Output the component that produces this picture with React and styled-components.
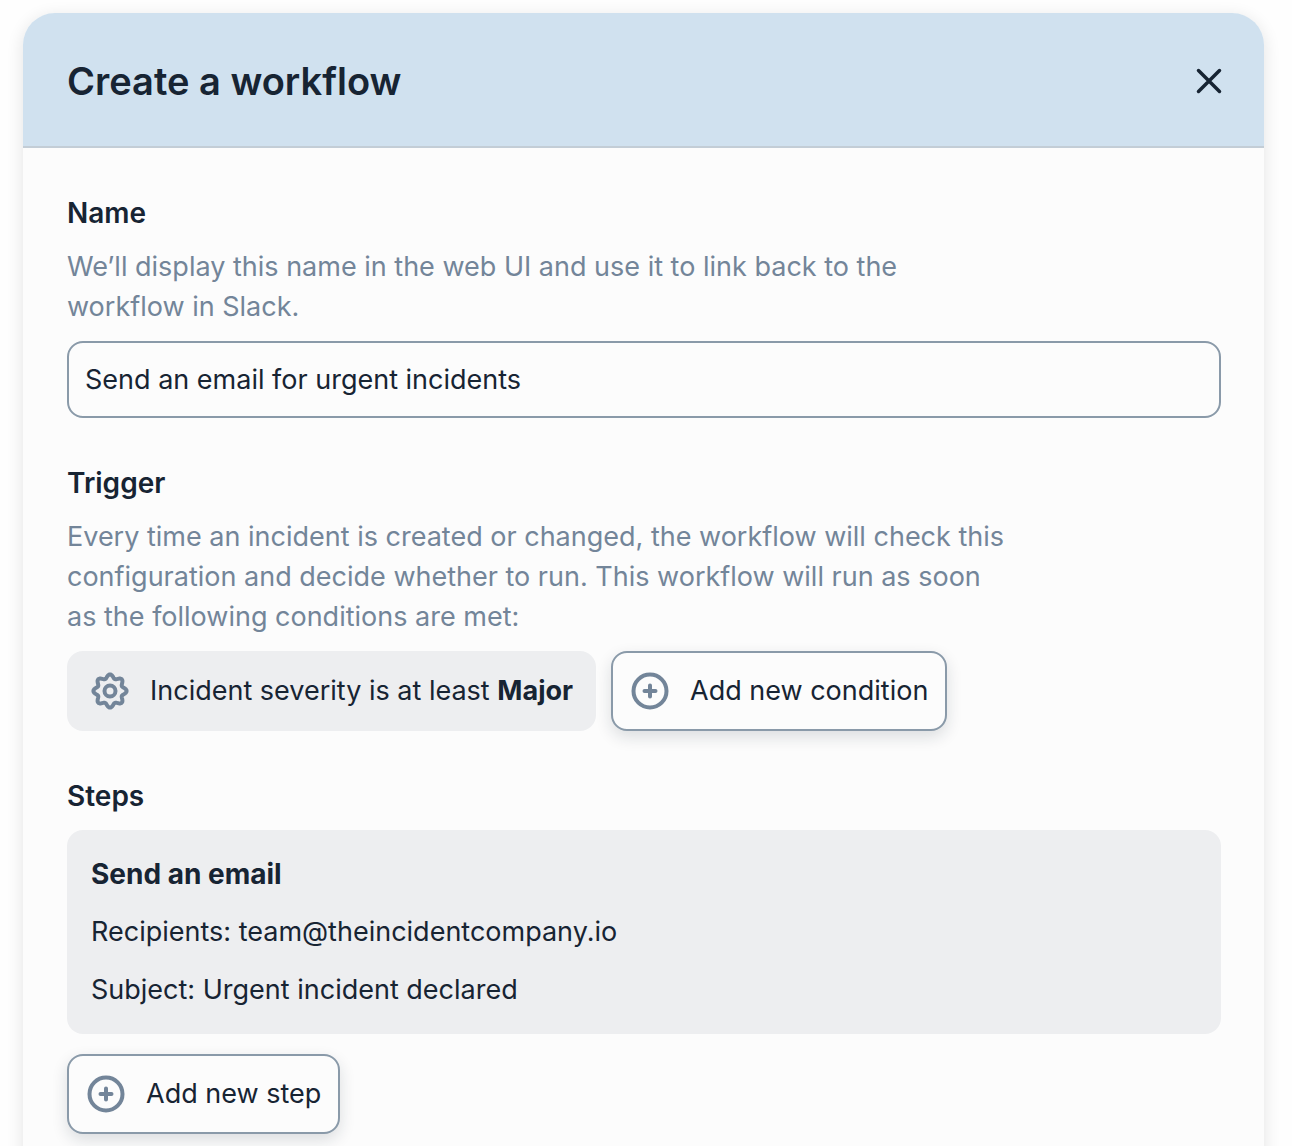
import React from 'react';
import styled, { createGlobalStyle } from 'styled-components';

const GlobalStyle = createGlobalStyle`
    * {
        box-sizing: border-box;
    }
    body {
        margin: 0;
        background: #fefefe;
        color: #172433;
        font-family: Inter, 'Liberation Sans', sans-serif;
        font-size: 27px;
        line-height: 40px;
    }
`;

const Panel = styled.main`
    margin: 13px 28px 0 23px;
    border-radius: 32px 32px 0 0;
    background: #fcfcfc;
    box-shadow: 0 4px 16px 2px rgba(0, 0, 0, 0.09);
`;

const Header = styled.header`
    display: flex;
    align-items: center;
    justify-content: space-between;
    padding: 44px 42px 41px 44px;
    border-bottom: 2px solid #c3cdd6;
    border-radius: 32px 32px 0 0;
    background: #d0e1ef;
`;

const Title = styled.h1`
    margin: 0;
    font-size: 38px;
    line-height: 48px;
    font-weight: 600;
`;

const CloseButton = styled.button`
    display: flex;
    padding: 0;
    border: 0;
    background: none;
    color: inherit;
    cursor: pointer;
`;

const Form = styled.form`
    display: flex;
    flex-direction: column;
    gap: 45px;
    padding: 45px 43px 60px 44px;
`;

const Section = styled.section`
    display: flex;
    flex-direction: column;
    gap: 14px;
`;

const Label = styled.label`
    font-size: 28px;
    font-weight: 600;
`;

const Heading = styled.h2`
    margin: 0;
    font-size: 28px;
    line-height: 40px;
    font-weight: 600;
`;

const Description = styled.p`
    max-width: 944px;
    margin: 0;
    color: #738599;
`;

const TextInput = styled.input`
    width: 100%;
    height: 77px;
    padding: 0 16px;
    border: 2px solid #8a9aa9;
    border-radius: 16px;
    background: #fcfcfc;
    color: inherit;
    font: inherit;
`;

const Row = styled.div`
    display: flex;
    flex-wrap: wrap;
    gap: 15px;
`;

const Condition = styled.div`
    display: flex;
    align-items: center;
    gap: 20px;
    height: 80px;
    padding: 0 23px;
    border-radius: 16px;
    background: #edeef0;

    strong {
        font-weight: 700;
    }
`;

const AddButton = styled.button`
    display: flex;
    align-items: center;
    align-self: flex-start;
    gap: 20px;
    height: 80px;
    padding: 0 17px;
    border: 2px solid #8a9aa9;
    border-radius: 16px;
    background: #fcfcfc;
    box-shadow: 0 6px 16px rgba(23, 36, 51, 0.14);
    color: inherit;
    font: inherit;
    cursor: pointer;
`;

const StepList = styled.div`
    display: flex;
    flex-direction: column;
    gap: 20px;
`;

const StepCard = styled.article`
    display: flex;
    flex-direction: column;
    gap: 18px;
    padding: 24px;
    border-radius: 16px;
    background: #edeef0;
`;

const StepTitle = styled.h3`
    margin: 0;
    font-size: 28px;
    line-height: 40px;
    font-weight: 700;
`;

const StepDetail = styled.p`
    margin: 0;
`;

const Icon = styled.svg`
    flex: none;
    fill: none;
    stroke: ${props => props.$color || '#738599'};
    stroke-width: ${props => props.$weight || 4};
    stroke-linecap: round;
    stroke-linejoin: round;
`;

const CloseIcon = () => (
    <Icon width="26" height="26" viewBox="0 0 26 26" $color="#172433" $weight="3.5" aria-hidden="true">
        <path d="M2.5 2.5l21 21M23.5 2.5l-21 21" />
    </Icon>
);

const PlusIcon = () => (
    <Icon width="40" height="40" viewBox="0 0 40 40" aria-hidden="true">
        <circle cx="20" cy="20" r="16.5" />
        <path d="M20 14.5v11M14.5 20h11" />
    </Icon>
);

// eight rounded teeth around the centre, each one a turn of 45 degrees
const gearPath = () => {
    const points = [];
    for (let i = 0; i < 144; i++) {
        const angle = (i / 144) * Math.PI * 2;
        const r = 14.7 + 1.9 * Math.cos(8 * angle);
        points.push(`${(20 + r * Math.sin(angle)).toFixed(2)} ${(20 - r * Math.cos(angle)).toFixed(2)}`);
    }
    return `M${points.join('L')}Z`;
};

const GearIcon = () => (
    <Icon width="40" height="40" viewBox="0 0 40 40" aria-hidden="true">
        <path d={gearPath()} />
        <circle cx="20" cy="20" r="5.5" />
    </Icon>
);

const App = () => (
    <>
        <GlobalStyle />
        <Panel>
            <Header>
                <Title>Create a workflow</Title>
                <CloseButton type="button" aria-label="Close">
                    <CloseIcon />
                </CloseButton>
            </Header>
            <Form onSubmit={e => e.preventDefault()}>
                <Section>
                    <Label htmlFor="name">Name</Label>
                    <Description id="name-help">
                        We’ll display this name in the web UI and use it to link back to the workflow in Slack.
                    </Description>
                    <TextInput
                        id="name"
                        type="text"
                        aria-describedby="name-help"
                        defaultValue="Send an email for urgent incidents"
                    />
                </Section>
                <Section>
                    <Heading>Trigger</Heading>
                    <Description>
                        Every time an incident is created or changed, the workflow will check this configuration
                        and decide whether to run. This workflow will run as soon as the following conditions are met:
                    </Description>
                    <Row>
                        <Condition>
                            <GearIcon />
                            <span>Incident severity is at least <strong>Major</strong></span>
                        </Condition>
                        <AddButton type="button">
                            <PlusIcon />
                            Add new condition
                        </AddButton>
                    </Row>
                </Section>
                <Section>
                    <Heading>Steps</Heading>
                    <StepList>
                        <StepCard>
                            <StepTitle>Send an email</StepTitle>
                            <StepDetail>Recipients: team@theincidentcompany.io</StepDetail>
                            <StepDetail>Subject: Urgent incident declared</StepDetail>
                        </StepCard>
                        <AddButton type="button">
                            <PlusIcon />
                            Add new step
                        </AddButton>
                    </StepList>
                </Section>
            </Form>
        </Panel>
    </>
);

export default App;
